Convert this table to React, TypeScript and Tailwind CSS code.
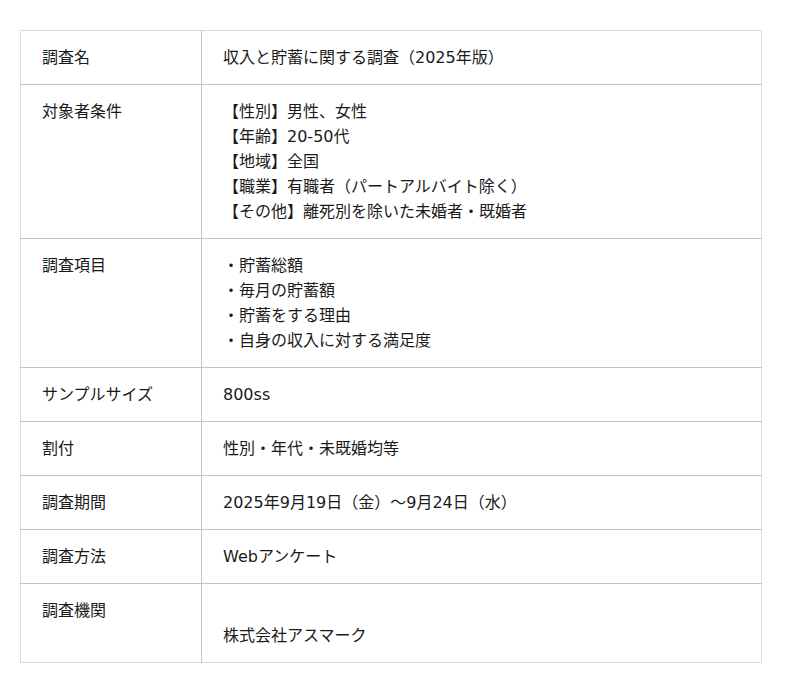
const rows: { label: string; lines: string[] }[] = [
  { label: "調査名", lines: ["収入と貯蓄に関する調査（2025年版）"] },
  {
    label: "対象者条件",
    lines: [
      "【性別】男性、女性",
      "【年齢】20-50代",
      "【地域】全国",
      "【職業】有職者（パートアルバイト除く）",
      "【その他】離死別を除いた未婚者・既婚者",
    ],
  },
  {
    label: "調査項目",
    lines: ["・貯蓄総額", "・毎月の貯蓄額", "・貯蓄をする理由", "・自身の収入に対する満足度"],
  },
  { label: "サンプルサイズ", lines: ["800ss"] },
  { label: "割付", lines: ["性別・年代・未既婚均等"] },
  { label: "調査期間", lines: ["2025年9月19日（金）〜9月24日（水）"] },
  { label: "調査方法", lines: ["Webアンケート"] },
  { label: "調査機関", lines: ["", "株式会社アスマーク"] },
];

const App = () => {
  return (
    <div
      lang="ja"
      className="bg-white min-h-[693px] px-5 pt-[30px] font-['DejaVu_Sans','Noto_Sans_CJK_JP',sans-serif] text-[16px] leading-[25px] text-[#1a1a1a] [text-spacing-trim:space-all]"
    >
      <table className="w-[742px] border-collapse border border-[#ddd]">
        <tbody>
          {rows.map((row, i) => (
            <tr key={i} className="border-t border-[#c4c4c4] first:border-t-[#ddd]">
              <td className="w-[181px] align-top py-[14px] px-[21px] border-r border-[#c4c4c4]">
                {row.label}
              </td>
              <td className="align-top py-[14px] px-[21px]">
                {row.lines.map((line, j) => (
                  <div key={j} className="h-[25px] whitespace-nowrap">
                    {line}
                  </div>
                ))}
              </td>
            </tr>
          ))}
        </tbody>
      </table>
    </div>
  );
};

export default App;
